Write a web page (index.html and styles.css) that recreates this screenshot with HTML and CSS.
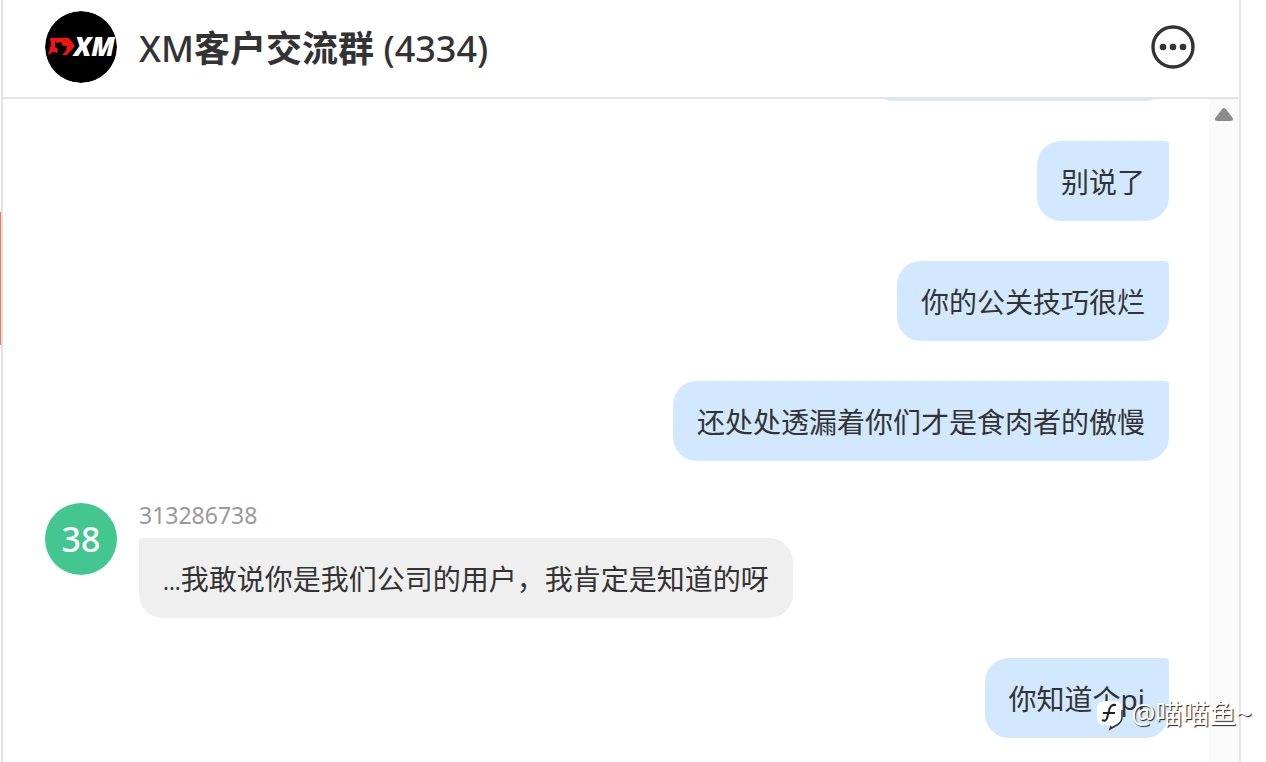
FILE: index.html
```html
<!DOCTYPE html>
<html lang="zh-CN">
<head>
<meta charset="utf-8">
<title>XM客户交流群</title>
<link rel="stylesheet" href="styles.css">
</head>
<body>
<div class="app">
  <main class="chat">
    <header class="chat-header">
      <svg class="avatar" viewBox="0 0 72 72" role="img" aria-label="XM">
        <circle cx="36" cy="36" r="36" fill="#000"/>
        <path fill="#f01414" d="M5 27H24L30 35L22 44H17L21 40L22 35L18 35L16 31L12 32L10 30V36L13 38L12 42L8 41L3 44L6 33Z"/>
        <text class="logo-text" x="29" y="45">XM</text>
      </svg>
      <h1 class="title">XM<b>客户交流群</b> (4334)</h1>
      <button class="more" type="button" aria-label="更多">
        <svg viewBox="0 0 44 44" width="44" height="44">
          <circle cx="22" cy="22" r="20" fill="none" stroke="#333" stroke-width="3.4"/>
          <g fill="#333"><circle cx="12" cy="22" r="3.3"/><circle cx="22" cy="22" r="3.3"/><circle cx="32" cy="22" r="3.3"/></g>
        </svg>
      </button>
    </header>
    <div class="body">
      <section class="messages">
        <div class="bubble mine earlier"></div>
        <p class="bubble mine">别说了</p>
        <p class="bubble mine">你的公关技巧很烂</p>
        <p class="bubble mine">还处处透漏着你们才是食肉者的傲慢</p>
        <article class="incoming">
          <div class="avatar initials">38</div>
          <div class="content">
            <div class="name">313286738</div>
            <p class="bubble"><span class="dots">...</span>我敢说你是我们公司的用户，我肯定是知道的呀</p>
          </div>
        </article>
        <p class="bubble mine">你知道个pi</p>
      </section>
      <div class="scrollbar">
        <svg viewBox="0 0 20 15" width="20" height="15"><path d="M10 3L17 12H3Z" fill="#8b8b8b" stroke="#8b8b8b" stroke-width="4" stroke-linejoin="round"/></svg>
      </div>
    </div>
  </main>
  <div class="marker"></div>
  <div class="watermark">
    <svg viewBox="0 0 32 34" width="32" height="34">
      <path d="M11 4H19Q27 4 27 12V20Q27 25 22 28L15 32L16 28H10Q2 28 2 20V12Q2 4 11 4Z" fill="#fff"/>
      <path d="M27 13V20Q27 25 22 28L15 32L16 29" fill="none" stroke="#333" stroke-width="1.5"/>
      <path d="M21 8Q15 7 14 14L12 21Q11 25 7 23M8 16H20" fill="none" stroke="#222" stroke-width="2"/>
    </svg>
    <span>@喵喵鱼~</span>
  </div>
</div>
</body>
</html>
```
FILE: styles.css
```css
* { box-sizing: border-box; }
body {
  margin: 0;
  background: #fff;
  color: #333;
  font-family: "Noto Sans", "Noto Sans CJK SC", sans-serif;
}
h1, p { margin: 0; }
.app {
  position: relative;
  height: 100vh;
  padding: 0 25px 0 1px;
  overflow: hidden;
}
.chat {
  display: flex;
  flex-direction: column;
  height: 100%;
  border: solid #e4e4e6;
  border-width: 0 2px;
}
.chat-header {
  display: flex;
  align-items: center;
  gap: 22px;
  flex: none;
  padding: 11px 44px 14px 42px;
  border-bottom: 2px solid #e4e4e6;
}
.avatar {
  flex: none;
  width: 72px;
  height: 72px;
  border-radius: 50%;
}
.logo-text {
  fill: #fff;
  font-size: 26px;
  font-weight: 900;
  font-style: italic;
}
.title {
  flex: 1;
  padding-top: 3px;
  font-size: 36px;
  line-height: 48px;
  font-weight: 500;
}
.title b { font-weight: 700; }
.more {
  display: flex;
  padding: 0;
  border: 0;
  background: none;
}
.body {
  display: flex;
  flex: 1;
  min-height: 0;
}
.messages {
  display: flex;
  flex: 1;
  flex-direction: column;
  justify-content: flex-end;
  align-items: flex-start;
  gap: 40px;
  padding: 0 40px 24px 42px;
  overflow: hidden;
}
.bubble {
  flex: none;
  width: fit-content;
  padding: 21px 24px 19px;
  border-radius: 4px 24px 24px 24px;
  background: #efefef;
  font-size: 28px;
  line-height: 40px;
}
.mine {
  align-self: flex-end;
  border-radius: 24px 4px 24px 24px;
  background: #d1e8ff;
}
.earlier {
  width: 300px;
  height: 80px;
}
.incoming {
  display: flex;
  gap: 22px;
}
.initials {
  margin-top: 2px;
  background: #43c690;
  color: #fff;
  font-size: 34px;
  font-weight: 500;
  line-height: 72px;
  text-align: center;
}
.name {
  margin-bottom: 9px;
  color: #999;
  font-size: 23px;
  line-height: 28px;
}
.dots {
  font-size: 22px;
  line-height: 1;
}
.scrollbar {
  display: flex;
  justify-content: center;
  flex: none;
  width: 30px;
  padding-top: 8px;
  background: #fafafa;
}
.marker {
  position: absolute;
  left: 0;
  top: 212px;
  width: 2px;
  height: 133px;
  border-right: 1px solid #f9d5c9;
  background: #d9806a;
}
.watermark {
  position: absolute;
  right: 14px;
  bottom: 28px;
  display: flex;
  align-items: center;
  color: #fff;
  font-size: 27px;
  line-height: 40px;
  text-shadow: 1px 1px 1px #222;
}
.watermark svg { margin-right: 4px; }
```
